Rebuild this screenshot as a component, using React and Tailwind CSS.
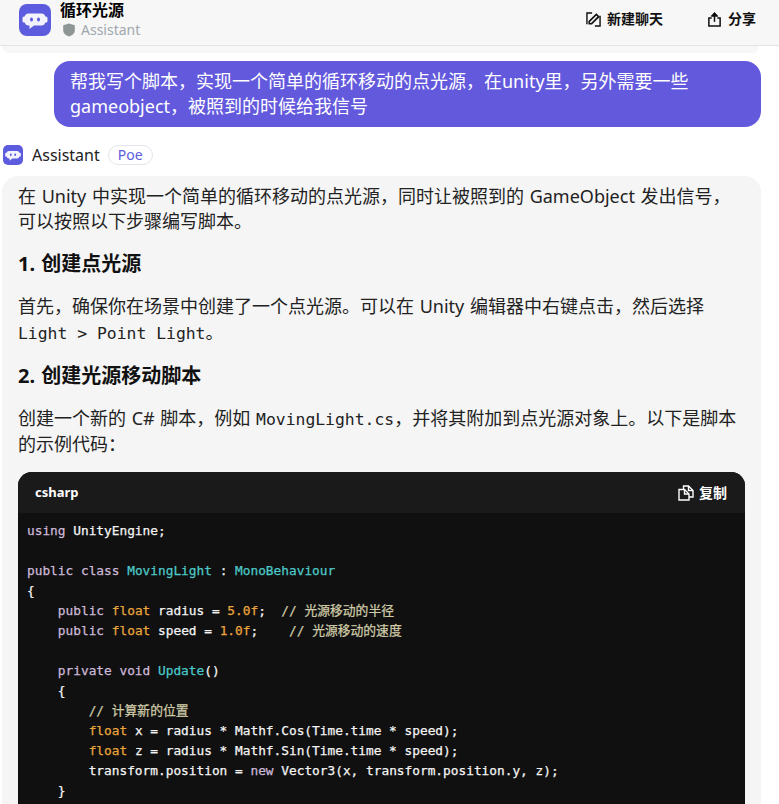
import React from 'react';

const sans = 'font-["Noto_Sans","Noto_Sans_CJK_SC",sans-serif]';
const mono = 'font-["DejaVu_Sans_Mono","Noto_Sans_CJK_SC",monospace]';

const BotIcon = ({ className }) => (
  <svg viewBox="0 0 32 32" className={className}>
    <rect width="32" height="32" rx="8" fill="#5d5cde" />
    <path d="M9.500 9.500h13a4 4 0 0 1 3.800 3H27a1.500 1.500 0 0 1 1.500 1.500v3A1.500 1.500 0 0 1 27 18.500h-.7a4 4 0 0 1-3.800 3H15l-4.500 3.500v-3.500h-1a4 4 0 0 1-3.800-3H5A1.500 1.500 0 0 1 3.500 17v-3A1.500 1.500 0 0 1 5 12.500h.7a4 4 0 0 1 3.800-3z" fill="#f3f1fb" />
    <ellipse cx="12.500" cy="15.500" rx="1.500" ry="2.100" fill="#5d5cde" />
    <ellipse cx="19.500" cy="15.500" rx="1.500" ry="2.100" fill="#5d5cde" />
  </svg>
);

const Shield = () => (
  <svg viewBox="0 0 14 14" className="w-[14px] h-[14px]">
    <path d="M7 .5l5.800 1.800v5.200c0 2.900-2.800 5-5.800 6-3-1-5.800-3.100-5.800-6V2.300z" fill="#8f9696" />
  </svg>
);

const EditIcon = () => (
  <svg viewBox="0 0 16 16" fill="none" stroke="#111" strokeWidth="1.500" className="w-[15px] h-[15px]">
    <path d="M6.500 1H1v12M9.500 15H15V4" />
    <path d="M3.500 12.500V10L11 2.500 13.500 5 6 12.500z" strokeWidth="1.800" />
  </svg>
);

const ShareIcon = () => (
  <svg viewBox="0 0 16 16" fill="none" stroke="#111" strokeWidth="1.600" className="w-[15px] h-[15px]">
    <path d="M5 6.500H2V15h12V6.500h-3" />
    <path d="M8 10.500V2" />
    <path d="M8 .5l3.500 4h-7z" fill="#111" strokeWidth="1" />
  </svg>
);

const CopyIcon = () => (
  <svg viewBox="0 0 16 16" fill="none" stroke="#fff" strokeWidth="1.400" className="w-[16px] h-[16px]">
    <path d="M5.500 4V1h5L15 5.500V12h-4" />
    <path d="M1 4.500h5.500L11 9v6H1z" />
    <path d="M6.500 4.500V9H11M10.500 1v4.500H15" />
  </svg>
);

const K = ({ children }) => <span className="text-[#cdb9d8]">{children}</span>;
const T = ({ children }) => <span className="text-[#eaa53c]">{children}</span>;
const C = ({ children }) => <span className="text-[#4cc9c9]">{children}</span>;
const G = ({ children }) => <span className="text-[#cfcba8]">{children}</span>;

const codeLines = [
  <><K>using</K> UnityEngine;</>,
  '',
  <><K>public class</K> <C>MovingLight</C> : <C>MonoBehaviour</C></>,
  '{',
  <>    <K>public</K> <T>float</T> radius = <T>5.0f</T>;  <G>// 光源移动的半径</G></>,
  <>    <K>public</K> <T>float</T> speed = <T>1.0f</T>;    <G>// 光源移动的速度</G></>,
  '',
  <>    <K>private void</K> <C>Update</C>()</>,
  '    {',
  <>        <G>// 计算新的位置</G></>,
  <>        <T>float</T> x = radius * Mathf.Cos(Time.time * speed);</>,
  <>        <T>float</T> z = radius * Mathf.Sin(Time.time * speed);</>,
  <>        transform.position = <K>new</K> Vector3(x, transform.position.y, z);</>,
  '    }',
];

export default function App() {
  return (
    <div className={`w-[779px] h-[804px] overflow-hidden bg-white text-[#1a1a1a] ${sans}`}>
      <header className="h-[46px] bg-[#f7f7f7] border-b border-[#e4e4e4] flex items-start justify-between pl-[19px] pr-[23px]">
        <div className="flex items-start gap-[9px] mt-[4px]">
          <BotIcon className="w-[32px] h-[32px]" />
          <div className="-mt-[4px]">
            <div className="text-[16px] leading-[20px] font-bold text-black">循环光源</div>
            <div className="flex items-center gap-[5px] mt-0 pl-[2px]">
              <Shield />
              <span className="text-[14px] leading-[20px] text-[#a0a8ad]">Assistant</span>
            </div>
          </div>
        </div>
        <div className="flex items-center mt-[10px] text-[14px] leading-[18px] font-bold text-[#111]">
          <div className="flex items-center gap-[6px]"><EditIcon />新建聊天</div>
          <div className="flex items-center gap-[6px] ml-[44px]"><ShareIcon />分享</div>
        </div>
      </header>
      <div className="h-[7px] ml-[2px] mr-[20px] bg-[#f7f7f7] rounded-b-[14px]" />
      <div className="flex justify-end mt-[8px] pr-[18px]">
        <div className="w-[707px] h-[66px] bg-[#6359dd] text-white rounded-[16px] px-[16px] py-[8px] text-[18px] leading-[25px]">
          帮我写个脚本，实现一个简单的循环移动的点光源，在unity里，另外需要一些gameobject，被照到的时候给我信号
        </div>
      </div>
      <div className="flex items-center mt-[16px] pl-[3px]">
        <BotIcon className="w-[20px] h-[20px]" />
        <span className="ml-[9px] text-[16px] leading-[24px] text-[#222]">Assistant</span>
        <span className="ml-[8px] h-[20px] px-[9px] border border-[#e4e4ec] rounded-full text-[14px] leading-[18px] text-[#5d5cde]">Poe</span>
      </div>
      <div className="ml-[2px] mr-[18px] mt-[9px] bg-[#f5f5f5] rounded-t-[16px] pt-[8px] px-[16px] h-[640px] [word-spacing:1px]">
        <p className="max-w-[720px] text-[18px] leading-[25px] text-[#222]">在 Unity 中实现一个简单的循环移动的点光源，同时让被照到的 GameObject 发出信号，可以按照以下步骤编写脚本。</p>
        <h3 className="mt-[16px] text-[20px] leading-[28px] font-bold text-[#111]">1. 创建点光源</h3>
        <p className="mt-[15px] text-[18px] leading-[26px] text-[#222]">首先，确保你在场景中创建了一个点光源。可以在 Unity 编辑器中右键点击，然后选择 <code className={`${mono} text-[16.4px] leading-none [word-spacing:0]`}>Light &gt; Point Light</code>。</p>
        <h3 className="mt-[17px] text-[20px] leading-[28px] font-bold text-[#111]">2. 创建光源移动脚本</h3>
        <p className="mt-[15px] text-[18px] leading-[26px] text-[#222]">创建一个新的 C# 脚本，例如 <code className={`${mono} text-[16.4px] leading-none [word-spacing:0]`}>MovingLight.cs</code>，并将其附加到点光源对象上。以下是脚本的示例代码：</p>
        <div className="mt-[15px] rounded-t-[14px] overflow-hidden bg-[#101010] h-[340px] [word-spacing:0]">
          <div className="h-[41px] bg-[#1a1a1a] flex items-center justify-between pl-[17px] pr-[18px] text-white text-[13px] font-bold">
            <span>csharp</span>
            <span className="flex items-center gap-[5px] text-[14px]"><CopyIcon />复制</span>
          </div>
          <pre className={`${mono} pt-[8px] pl-[9px] text-[12.8px] leading-[20px] text-[#f4f4f4] [-webkit-text-stroke:0.25px]`}>
            {codeLines.map((line, i) => <div key={i} className="h-[20px]">{line}</div>)}
          </pre>
        </div>
      </div>
    </div>
  );
}
